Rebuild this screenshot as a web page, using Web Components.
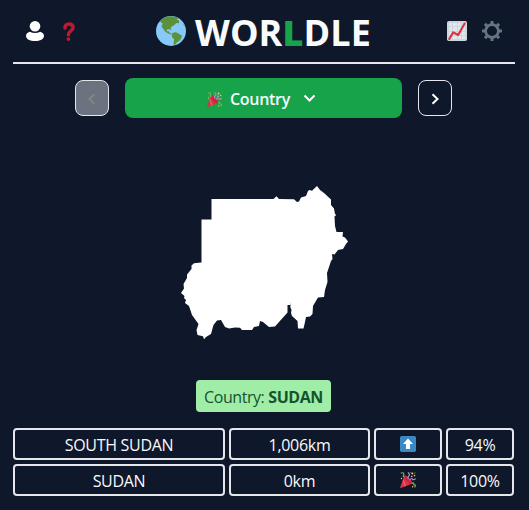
<!DOCTYPE html>
<html lang="en">
<head>
<meta charset="utf-8">
<title>Worldle</title>
<style>
html,body{margin:0;background:#0f172a}
body{width:529px;height:510px;overflow:hidden;color:#f8fafc;font:16px/24px "Open Sans","Noto Sans",sans-serif}
</style>
</head>
<body>
<worldle-app></worldle-app>
<script>
const define = (name, html) => {
  const tpl = document.createElement('template');
  tpl.innerHTML = html;
  customElements.define(name, class extends HTMLElement {
    constructor() {
      super();
      this.attachShadow({mode: 'open'}).append(tpl.content.cloneNode(true));
    }
  });
};

define('icon-user', `<style>:host,svg{display:block;width:18px;height:20px}</style>
<svg viewBox="0 0 18 20" fill="#fff"><circle cx="9" cy="5.3" r="5.3"/><path d="M3.8 10.7Q9 13.5 14.2 10.7C16.500 11.300 18 13 18 14.900C18 18 14 20 9 20S0 18 0 14.900C0 13 1.500 11.300 3.800 10.700Z"/></svg>`);

define('icon-question', `<style>:host,svg{display:block;width:12px;height:19px}</style>
<svg viewBox="0 0 12 19"><path d="M2 6.100C1.700 3.500 3.600 1.900 6 1.900C8.500 1.900 10 3.500 10 5.700C10 9 5.500 8.700 5.400 12.700" fill="none" stroke="#be1931" stroke-width="3.500" stroke-linecap="round"/><circle cx="5.400" cy="17.100" r="1.900" fill="#be1931"/></svg>`);

define('icon-globe', `<style>:host,svg{display:block;width:30px;height:30px}</style>
<svg viewBox="0 0 30 30"><circle cx="15" cy="15" r="15" fill="#88c9f9"/><g fill="#5c913b"><path d="M3.700 5.200C6.800 2 10.500 .4 14.700 .3L21 1.200L22.500 2.200L20.500 3.700L22.800 4.300L23.200 7.200L20.400 7L18.600 8.800L16.400 10.300L14.700 11.500L15.300 14.300L13.300 13.200L10.900 13.500L10.600 15.300L12.800 15.200L13.200 16.400L15.800 17.700L15.200 18.400L12.200 17.600L9.200 15.700L7.300 12.800L5.500 10.700L6.700 7.600L5 6.300Z"/><path d="M15.800 17.900L17.900 16.300L21 16.400L23.100 18L25.800 19.600L25.300 22.300L23.400 24.700L20.700 26.500L18.900 29.100L17.500 28.200L18.100 22.900L16 21.200Z"/><path d="M27 7L28.800 9.300L28 9.700Z"/></g></svg>`);

define('icon-chart', `<style>:host,svg{display:block;width:20px;height:20px}</style>
<svg viewBox="0 0 20 20"><rect width="20" height="20" rx="1.800" fill="#ccd6dd"/><path fill="#e1e8ed" d="M2 2h3v3H2zM6 2h4v3H6zM11 2h3v3h-3zM15 2h3v3h-3zM2 6h3v4H2zM6 6h4v4H6zM11 6h3v4h-3zM15 6h3v4h-3zM2 11h3v3H2zM6 11h4v3H6zM11 11h3v3h-3zM15 11h3v3h-3zM2 15h3v3H2zM6 15h4v3H6zM11 15h3v3h-3zM15 15h3v3h-3z"/><path d="M2.300 18L6.200 11.300L11.200 14L17.600 2.500" fill="none" stroke="#dd2e44" stroke-width="2.100" stroke-linecap="round" stroke-linejoin="round"/></svg>`);

define('icon-gear', `<style>:host,svg{display:block;width:20px;height:20px}</style>
<svg viewBox="-10 -10 20 20"><circle r="6.400" fill="none" stroke="#66757f" stroke-width="2.700"/><g stroke="#66757f" stroke-width="3" stroke-linecap="butt"><path d="M0-10V-7M0 7V10M-10 0H-7M7 0H10"/><path d="M0-10V-7M0 7V10M-10 0H-7M7 0H10" transform="rotate(45)"/></g></svg>`);

define('icon-party', `<style>:host{display:block;width:16px;height:16px}svg{display:block;width:100%;height:100%}</style>
<svg viewBox="0 0 16 16"><path fill="#dd2e44" d="M4.600 3.200C7 3.700 12 8 12.600 11.500L1 15.900Q0 16 .2 15Z"/><path fill="#a0041e" d="M5 3.600L12.300 11.300L10.500 12C7.500 10 5 7 4.300 5Z" opacity=".3"/><path fill="#ea596e" d="M3.500 7L6 13.800L4.500 14.400L2.700 9Z"/><g fill="none" stroke-width="1.200" stroke-linecap="round"><path stroke="#77b255" d="M1.200 1Q4.300 0 3.700 3Q2.500 4.500 4.400 5M12 11.400Q13.600 10 13.800 12Q13.500 13.500 15 12.700Q15.700 14 14.900 15"/><path stroke="#aa8dd8" d="M8.300 .7Q10.400 2.300 8.800 4Q7.500 5.200 8.300 6.500M10 7.700Q11.700 5.600 12.500 7.200Q13.800 8.300 15.400 6.900"/></g><g fill="#fdcb58"><circle cx="12.300" cy="1.600" r="1"/><circle cx="14.500" cy="3.600" r=".8"/><circle cx="11.700" cy="4.500" r=".8"/><circle cx="1.500" cy="6.500" r=".7"/><circle cx="12.600" cy="14.800" r=".7"/></g><path fill="#5c913b" d="M14.200 .4h1.300v1.200h-1.300zM10.500 .1h1v1h-1z"/></svg>`);

define('icon-up', `<style>:host,svg{display:block;width:16px;height:16px}</style>
<svg viewBox="0 0 16 16"><rect width="16" height="16" rx="1.800" fill="#3b88c3"/><path fill="#fff" d="M8 2.500L13 8H10V13H6V8H3Z"/></svg>`);

define('app-header', `<style>
:host{display:flex;align-items:center;border-bottom:2px solid #e5e7eb;padding:0 13px;box-sizing:border-box;height:64px}
.left,.right{display:flex;align-items:center}
.left{width:130px;gap:19px}
h1{flex:1;display:flex;align-items:center;margin:0;font:700 36px/40px "Open Sans","Noto Sans",sans-serif;white-space:nowrap}
h1 span{margin-left:9px;padding-top:4px;letter-spacing:.08px} b{color:#16a34a}
.right{gap:15px}
</style>
<div class="left"><icon-user></icon-user><icon-question></icon-question></div>
<h1><icon-globe></icon-globe><span>WOR<b>L</b>DLE</span></h1>
<div class="right"><icon-chart></icon-chart><icon-gear></icon-gear></div>`);

define('step-button', `<style>
:host{display:grid;place-items:center;box-sizing:border-box;width:34px;height:36px;border:1px solid #e5e7eb;border-radius:8px;color:#fff}
:host([disabled]){background:#6b7280;color:#848484}
:host([back]) svg{transform:scaleX(-1)}
svg{display:block;width:8px;height:12px;margin-top:2px}
</style><svg viewBox="0 0 8 12"><path d="M1.500 1.200L6.500 6L1.500 10.800" fill="none" stroke="currentColor" stroke-width="2"/></svg>`);

define('round-nav', `<style>
:host{display:flex;align-items:center;gap:16px;margin-top:14px;padding-left:62px;height:40px}
.main{display:flex;align-items:center;width:277px;height:40px;box-sizing:border-box;padding-left:82px;border-radius:8px;background:#16a34a;font-weight:600}
icon-party{width:15px;height:15px;margin:3px 8px 0 0}
span{padding-top:2px;letter-spacing:-.3px}
svg{width:13px;height:9px;margin:0 0 0 13px}
</style>
<step-button back disabled></step-button>
<div class="main"><icon-party></icon-party><span>Country</span><svg viewBox="0 0 13 9"><path d="M1.500 1.500L6.500 6.500L11.500 1.500" fill="none" stroke="#fff" stroke-width="2"/></svg></div>
<step-button></step-button>`);

define('country-shape', `<style>:host{display:block;margin:67px 0 0 168px;width:168px;height:155px}svg{display:block}</style>
<svg width="168" height="155" viewBox="181 185 168 155"><path fill="#fff" d="M211.500 199L273.500 199L276.500 196.300L279 199L294 199.300L297 202L299 201.500L301 197.500L306 196L308 191L309.500 190L312 190.700L317 186L320 190L324 193L331 199.500L331 205L334 208.500L335 214L336.300 215L334.500 216.500L335 226L336.500 232L343 232L342.500 236.500L345 237.500L348 241.500L346 244L343 249L338 250L334.500 254.500L332 254L332.500 259L331 261L327 273L327.500 282L325 290L324 297L318 297.500L313 306L312.500 314L310 316.500L306 317L305 322L303.500 328.500L298 328.500L297.500 321L292 316L291 313L291.500 310L290.300 307L291 302L290.300 305L287.500 305L287.500 312.500L275 326.500L269 327L263 322L260 321L259 326L254 327L252 330L242 330L240 327.800L235 327.500L229 328.500L225 327L221 320L217 320.500L213.500 325L211 334L206 337L204 339.300L203 336.300L197.500 335L196.500 330L198.500 324L192 315L189 306L185 303L186 300L184 298L184.500 296L181 293L184 288.500L183.500 284L187 278L187 274.500L191.500 269L191.500 265.500L194 263.300L201.500 262.500V219.500H211.500Z"/></svg>`);

define('answer-badge', `<style>
:host{display:flex;align-items:center;justify-content:center;width:135px;height:32px;margin:40px 0 0 183px;padding-top:1px;box-sizing:border-box;border-radius:4px;background:#a0eda7;color:#14532d;letter-spacing:-.45px;white-space:nowrap}
::slotted(b){font-weight:700;margin-left:4px}
</style><slot></slot>`);

define('guess-cell', `<style>
:host{display:flex;align-items:center;justify-content:center;box-sizing:border-box;height:32px;border:2px solid #e5e7eb;border-radius:4px;padding-top:2px;letter-spacing:-.3px;white-space:nowrap}
:host([icon]){padding-top:0}
</style><slot></slot>`);

define('guess-table', `<style>:host{display:grid;grid-template-columns:212px 141px 68px 68px;gap:4px;margin-top:16px}</style><slot></slot>`);

define('worldle-app', `<style>:host{display:block;padding:0 14px 0 13px}</style>
<app-header></app-header>
<round-nav></round-nav>
<country-shape></country-shape>
<answer-badge>Country:<b>SUDAN</b></answer-badge>
<guess-table>
<guess-cell>SOUTH SUDAN</guess-cell><guess-cell>1,006km</guess-cell><guess-cell icon><icon-up></icon-up></guess-cell><guess-cell>94%</guess-cell>
<guess-cell>SUDAN</guess-cell><guess-cell>0km</guess-cell><guess-cell icon><icon-party></icon-party></guess-cell><guess-cell>100%</guess-cell>
</guess-table>`);
</script>
</body>
</html>
